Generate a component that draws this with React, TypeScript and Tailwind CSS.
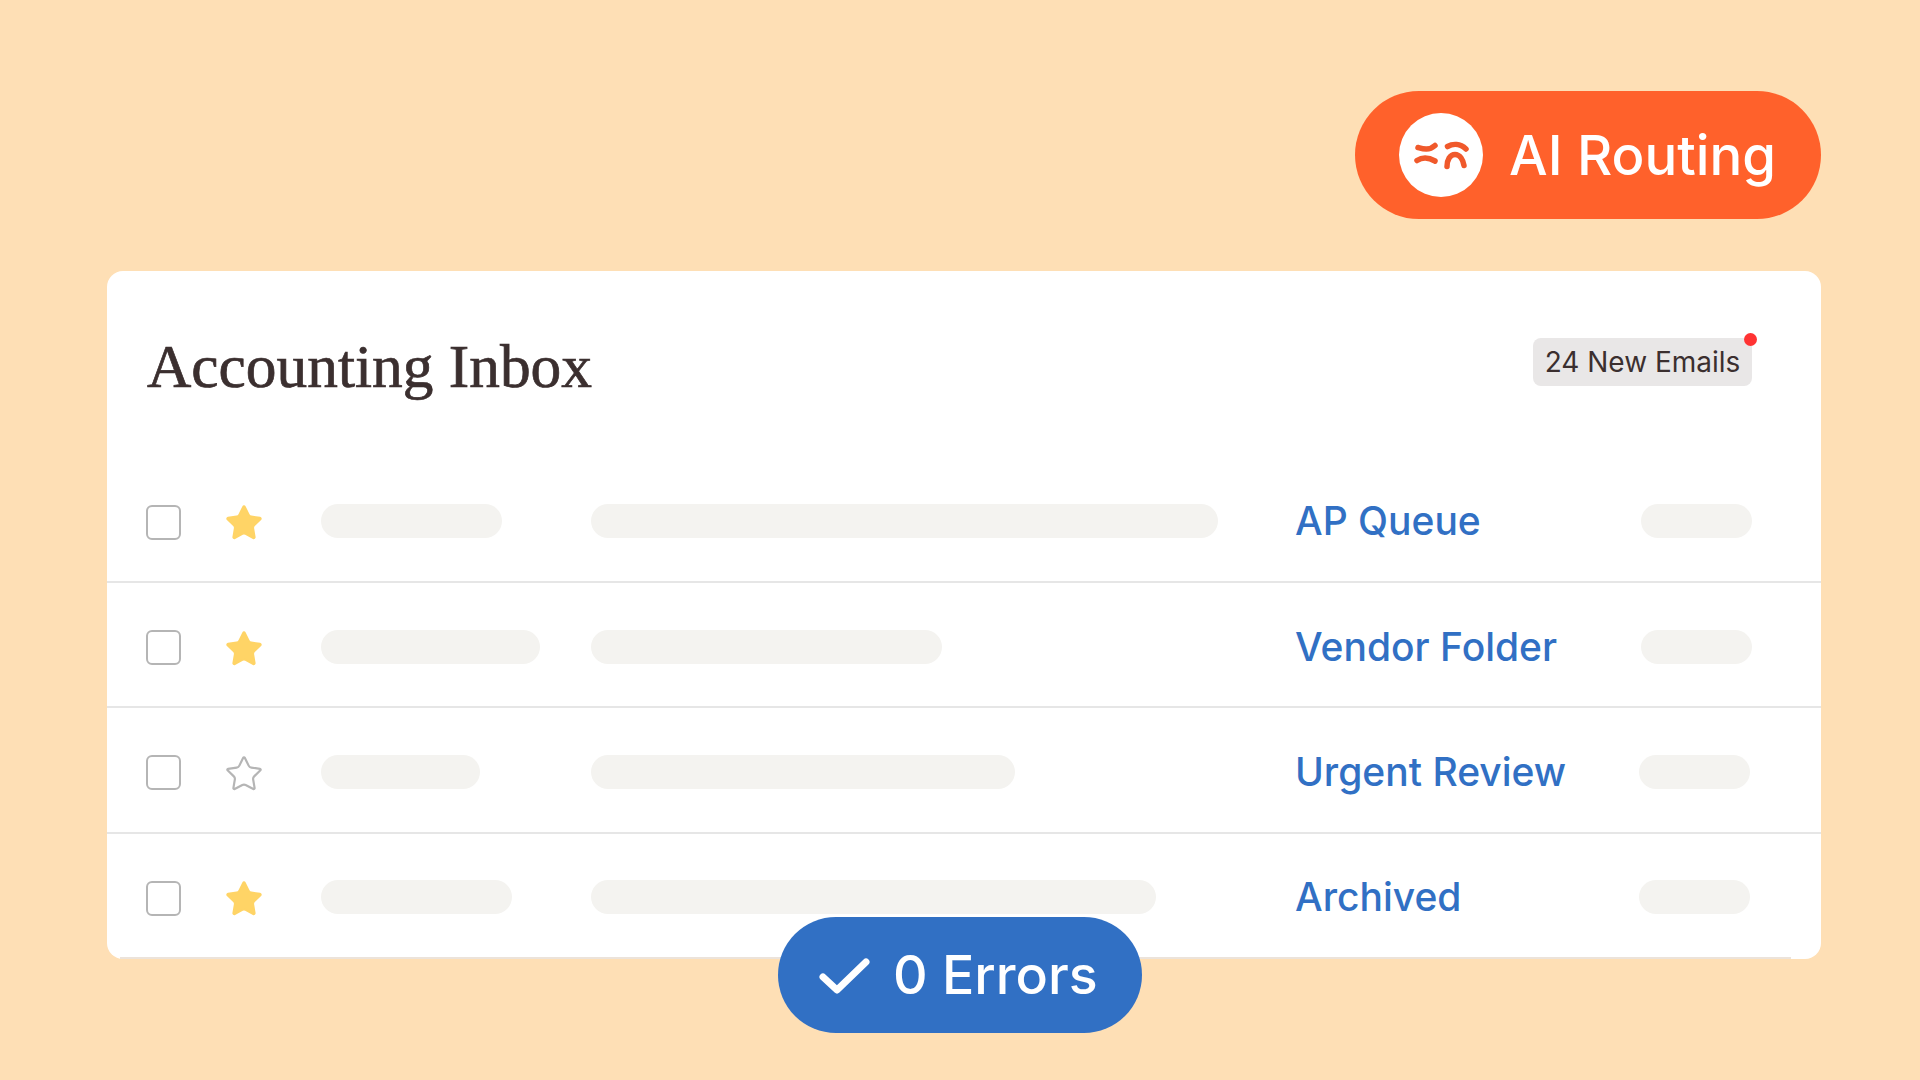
import { Star } from "lucide-react";

const rows = [
  { starred: true, a: "w-[181px]", b: "w-[627px]", label: "AP Queue", pill: "w-[111px] mr-[69px]" },
  { starred: true, a: "w-[219px]", b: "w-[351px]", label: "Vendor Folder", pill: "w-[111px] mr-[69px]" },
  { starred: false, a: "w-[159px]", b: "w-[424px]", label: "Urgent Review", pill: "w-[111px] mr-[71px]" },
  { starred: true, a: "w-[191px]", b: "w-[565px]", label: "Archived", pill: "w-[111px] mr-[71px]" },
];

function Row({ r, last }: { r: (typeof rows)[number]; last: boolean }) {
  return (
    <div className={`flex flex-col h-[125.33px] ${last ? "" : "border-b-2 border-[#e6e6e6]"}`}>
      <div className="flex items-center h-[34px] mt-[46.4px]">
        <div className="w-[35px] h-[35px] ml-[39px] mt-[2px] rounded-[6px] border-[2.5px] border-[#b5b5b5] shrink-0" />
        <div className="w-[40px] h-[40px] ml-[43px] mt-[4px] shrink-0 flex items-center justify-center">
          {r.starred ? (
            <Star size={40} strokeWidth={1.2} className="text-[#ffd466] fill-[#ffd466]" />
          ) : (
            <Star size={40} strokeWidth={1.3} className="text-[#b5b5b5]" />
          )}
        </div>
        <div className="w-[329px] ml-[-2px] pl-[59px] shrink-0 flex">
          <div className={`h-[34px] rounded-full bg-[#f4f3f0] ${r.a}`} />
        </div>
        <div className="w-[704px] shrink-0 flex">
          <div className={`h-[34px] rounded-full bg-[#f4f3f0] ${r.b}`} />
        </div>
        <div className="flex-1 text-[39px] leading-[34px] [font-weight:450] text-[#3170c4] font-['Inter',sans-serif]">{r.label}</div>
        <div className={`h-[34px] rounded-full bg-[#f4f3f0] ${r.pill}`} />
      </div>
    </div>
  );
}

export default function App() {
  return (
    <div className="w-[1920px] h-[1080px] overflow-hidden bg-[#fedfb5] flex flex-col pl-[107px] pr-[99px] pt-[91px]">
      <div className="self-end flex items-center h-[128px] w-[466px] rounded-full bg-[#ff612b] pl-[44px]">
        <div className="w-[84px] h-[84px] rounded-full bg-white shrink-0">
          <svg width="84" height="84" viewBox="0 0 84 84" fill="none" stroke="#f0592b" strokeWidth="5.5" strokeLinecap="round">
            <path d="M19 34.5C24 36 30 38 36 32.5" />
            <path d="M18 47.5C24 43.5 30 44.5 36 48" />
            <path d="M48.5 33.5C54 30.5 61 30.5 67 36" />
            <path d="M48 53.5C48 47 51 41.5 56 41.5C61 41.5 64 47 65 52.5" />
          </svg>
        </div>
        <span className="ml-[26px] text-[54.5px] leading-none [font-weight:450] text-white font-['Inter',sans-serif]">AI Routing</span>
      </div>
      <div className="relative mt-[52px] h-[688px] rounded-[16px] bg-white flex flex-col">
        <div className="flex items-start h-[187px]">
          <h1 className="ml-[40px] mt-[61px] text-[61.4px] leading-[68px] [-webkit-text-stroke:0.7px_#3b2f2f] text-[#3b2f2f] font-['Liberation_Serif',serif]">Accounting Inbox</h1>
          <div className="relative ml-auto mr-[69px] mt-[67px] h-[48px] w-[219px] rounded-[8px] bg-[#e9e7e7] flex items-center justify-center text-[28px] text-[#3b2f2f] font-['Inter',sans-serif]">
            24 New Emails
            <span className="absolute -right-[5px] -top-[5px] w-[13px] h-[13px] rounded-full bg-[#ff3333]" />
          </div>
        </div>
        {rows.map((r, i) => (
          <Row key={r.label} r={r} last={i === rows.length - 1} />
        ))}
        <div className="h-[2px] ml-[13px] mr-[30px] -mt-[2px] bg-[#ece3da]" />
        <div className="absolute left-[671px] top-[646px] h-[116px] w-[364px] rounded-full bg-[#3170c4] flex items-center pl-[40px] text-white">
          <svg width="53" height="37" viewBox="0 0 53 37" fill="none" stroke="white" strokeWidth="7" strokeLinecap="round" strokeLinejoin="round">
            <path d="M5 20L19 33L48 5" />
          </svg>
          <span className="ml-[22px] text-[53.7px] leading-none [font-weight:450] font-['Inter',sans-serif]">0 Errors</span>
        </div>
      </div>
    </div>
  );
}
